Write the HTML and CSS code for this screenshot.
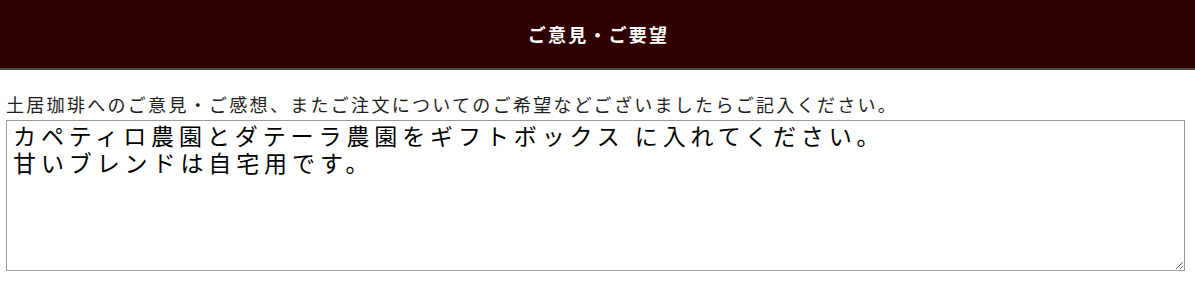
FILE: index.html
```html
<!DOCTYPE html>
<html lang="ja">
<head>
<meta charset="utf-8">
<title>ご意見・ご要望</title>
<link rel="stylesheet" href="styles.css">
</head>
<body>
<header class="section-head">
  <h2 class="section-title">ご意見・ご要望</h2>
</header>
<main class="form-body">
  <p class="field-label">土居珈琲へのご意見・ご感想、またご注文についてのご希望などございましたらご記入ください。</p>
  <textarea class="comment-box">カペティロ農園とダテーラ農園をギフトボックス に入れてください。
甘いブレンドは自宅用です。</textarea>
</main>
</body>
</html>
```

FILE: styles.css
```css
html, body {
  margin: 0;
  padding: 0;
  background: #ffffff;
}

body {
  font-family: "Noto Sans CJK JP", "Noto Sans", sans-serif;
  color: #1a1a1a;
}

.section-head {
  height: 68px;
  background: #300000;
  border-bottom: 2px solid #4a4a4a;
  display: flex;
  align-items: center;
  justify-content: center;
}

.section-title {
  margin: 0;
  color: #ffffff;
  font-size: 18px;
  font-weight: 700;
  letter-spacing: 2.2px;
  line-height: 20px;
  padding-left: 2px;
}

.form-body {
  padding: 24px 10px 0 6px;
}

.field-label {
  margin: 0;
  font-size: 18px;
  line-height: 20px;
  letter-spacing: 2.3px;
  color: #1e1e1e;
  white-space: nowrap;
}

.comment-box {
  display: block;
  box-sizing: border-box;
  width: 1179px;
  height: 151px;
  margin: 6px 0 0 0;
  padding: 1px 6px;
  border: 1px solid #9a9a9a;
  border-radius: 0;
  font-family: "Noto Sans CJK JP", sans-serif;
  font-size: 23px;
  line-height: 27px;
  letter-spacing: 4.9px;
  color: #000000;
  background: #ffffff;
  outline: none;
}
```
